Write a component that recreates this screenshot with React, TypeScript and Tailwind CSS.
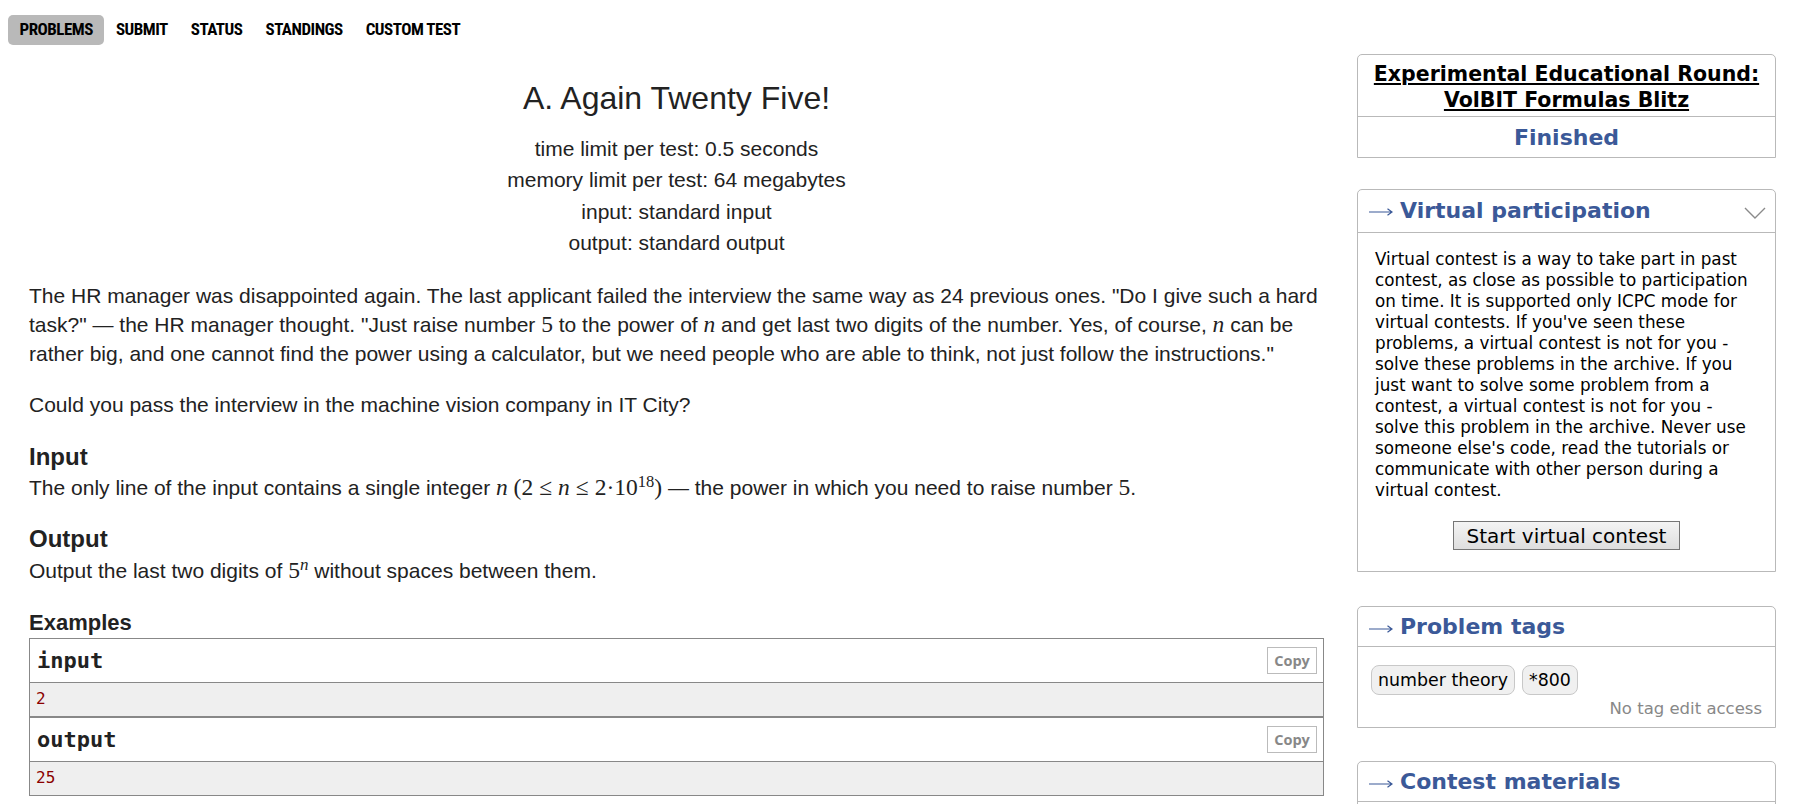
import type { ReactNode } from "react";

const NAV_ITEMS = ["PROBLEMS", "SUBMIT", "STATUS", "STANDINGS", "CUSTOM TEST"];

const VIRTUAL_TEXT = [
  "Virtual contest is a way to take part in past",
  "contest, as close as possible to participation",
  "on time. It is supported only ICPC mode for",
  "virtual contests. If you've seen these",
  "problems, a virtual contest is not for you -",
  "solve these problems in the archive. If you",
  "just want to solve some problem from a",
  "contest, a virtual contest is not for you -",
  "solve this problem in the archive. Never use",
  "someone else's code, read the tutorials or",
  "communicate with other person during a",
  "virtual contest.",
];

function Var({ children }: { children: ReactNode }) {
  return (
    <span className="font-['Liberation_Serif',serif] text-[23.5px] italic">
      {children}
    </span>
  );
}

function Num({ children }: { children: ReactNode }) {
  return (
    <span className="font-['Liberation_Serif',serif] text-[23.5px]">
      {children}
    </span>
  );
}

function SampleBlock({ title, value }: { title: string; value: string }) {
  return (
    <div className="border border-[#888]">
      <div className="flex h-[44px] items-center justify-between border-b border-[#888] pl-[7px] pr-[6px]">
        <span className="font-['DejaVu_Sans_Mono',monospace] text-[22px] font-bold text-[#222]">
          {title}
        </span>
        <button className="h-[27px] w-[50px] border border-[#bbb] bg-white font-['Open_Sans',sans-serif] text-[14.5px] font-bold text-[#888]">
          Copy
        </button>
      </div>
      <pre className="h-[33px] bg-[#efefef] pl-[6px] pt-[6px] font-['DejaVu_Sans_Mono',monospace] text-[16px] leading-[20px] text-[#8b0000]">
        {value}
      </pre>
    </div>
  );
}

function SideBox({
  title,
  chevron,
  headerHeight,
  children,
}: {
  title: string;
  chevron?: boolean;
  headerHeight: string;
  children?: ReactNode;
}) {
  return (
    <div className="rounded-t-[5px] border border-[#b9b9b9]">
      <div
        className={`flex items-center border-b border-[#b9b9b9] pl-[11px] pr-[9px] text-[#3b5998] ${headerHeight}`}
      >
        <svg
          className="mt-[4px] shrink-0"
          width="24"
          height="10"
          viewBox="0 0 24 10"
          fill="none"
        >
          <path
            d="M0 5H22.5M18.5 1.8L23 5L18.5 8.2"
            stroke="currentColor"
            strokeWidth="1.2"
          />
        </svg>
        <span className="ml-[7px] text-[22px] font-bold">{title}</span>
        {chevron && (
          <svg
            className="ml-auto mt-[6px]"
            width="22"
            height="12"
            viewBox="0 0 22 12"
            fill="none"
          >
            <polyline
              points="1,1 11,11 21,1"
              stroke="#8a8a8a"
              strokeWidth="1.4"
            />
          </svg>
        )}
      </div>
      {children}
    </div>
  );
}

export default function App() {
  return (
    <div className="min-h-screen bg-white">
      <nav className="flex pl-2 pt-[15px] font-['Roboto_Condensed','Liberation_Sans_Narrow','DejaVu_Sans_Condensed',sans-serif] text-[17px] font-bold tracking-[-0.5px] font-stretch-condensed text-black">
        {NAV_ITEMS.map((item, i) => (
          <a
            key={item}
            className={`flex h-[30px] items-center px-[11.5px] ${
              i === 0 ? "rounded-[5px] bg-[#b9b9b9]" : ""
            }`}
          >
            {item}
          </a>
        ))}
      </nav>

      <div className="flex gap-[33px] pl-[29px] pr-[36px]">
        <main className="min-w-0 flex-1 font-['Liberation_Sans',Arial,sans-serif] text-[21px] text-[#222]">
          <div className="pt-[35px] text-center">
            <div className="text-[32px] leading-[37px]">A. Again Twenty Five!</div>
            <div className="mt-[16px] leading-[31.3px]">
              <div>time limit per test: 0.5 seconds</div>
              <div>memory limit per test: 64 megabytes</div>
              <div>input: standard input</div>
              <div>output: standard output</div>
            </div>
          </div>

          <div className="mt-[23px] space-y-[22px] leading-[29px]">
            <p>
              The HR manager was disappointed again. The last applicant failed
              the interview the same way as 24 previous ones. "Do I give such a
              hard task?" — the HR manager thought. "Just raise number{" "}
              <Num>5</Num> to the power of <Var>n</Var> and get last two digits
              of the number. Yes, of course, <Var>n</Var> can be rather big, and
              one cannot find the power using a calculator, but we need people
              who are able to think, not just follow the instructions."
            </p>
            <p>Could you pass the interview in the machine vision company in IT City?</p>
          </div>

          <h3 className="mt-[24px] text-[24px] font-bold leading-[27px]">Input</h3>
          <p className="mt-[3px] leading-[29px]">
            The only line of the input contains a single integer <Var>n</Var>{" "}
            <Num>
              (2<span className="mx-[6px]">≤</span>
              <i>n</i>
              <span className="mx-[6px]">≤</span>2·10
              <sup className="text-[16.5px]">18</sup>)
            </Num>{" "}
            — the power in which you need to raise number <Num>5</Num>.
          </p>

          <h3 className="mt-[23px] text-[24px] font-bold leading-[27px]">Output</h3>
          <p className="mt-[4px] leading-[29px]">
            Output the last two digits of{" "}
            <Num>
              5<sup className="text-[17px] italic">n</sup>
            </Num>{" "}
            without spaces between them.
          </p>

          <h3 className="mt-[25px] text-[22px] font-bold leading-[25px]">Examples</h3>
          <div className="mt-[3px]">
            <SampleBlock title="input" value="2" />
            <SampleBlock title="output" value="25" />
          </div>
        </main>

        <aside className="w-[419px] shrink-0 pt-[9px] font-['DejaVu_Sans',Verdana,sans-serif]">
          <div className="rounded-t-[5px] border border-[#b9b9b9] text-center">
            <div className="border-b border-[#b9b9b9] pb-[3px] pt-[6px] text-[20.5px] font-bold leading-[26px] text-black">
              <a className="underline">
                Experimental Educational Round:
                <br />
                VolBIT Formulas Blitz
              </a>
            </div>
            <div className="flex h-[40px] items-center justify-center text-[22px] font-bold text-[#3b5998]">
              Finished
            </div>
          </div>

          <div className="mt-[31px]">
            <SideBox title="Virtual participation" chevron headerHeight="h-[43px] pb-[2px]">
              <div className="px-[17px] pb-[21px] pt-[16px]">
                <p className="text-[16.8px] leading-[21px] text-black">
                  {VIRTUAL_TEXT.map((line, i) => (
                    <span key={i}>
                      {line}
                      {i < VIRTUAL_TEXT.length - 1 && <br />}
                    </span>
                  ))}
                </p>
                <div className="mt-[20px] flex justify-center">
                  <button className="h-[29px] w-[227px] border border-[#767676] bg-gradient-to-b from-[#f4f4f4] to-[#dedede] text-[20px] leading-none text-black">
                    Start virtual contest
                  </button>
                </div>
              </div>
            </SideBox>
          </div>

          <div className="mt-[34px]">
            <SideBox title="Problem tags" headerHeight="h-[40px]">
              <div className="px-[13px] pb-[6px] pt-[18px]">
                <div className="flex gap-[7px]">
                  <span className="flex h-[30px] items-center rounded-[8px] border border-[#c8c8c8] bg-[#f0f0f0] px-[6px] text-[17.4px] text-black">
                    number theory
                  </span>
                  <span className="flex h-[30px] items-center rounded-[8px] border border-[#c8c8c8] bg-[#f0f0f0] px-[6px] text-[17.4px] text-black">
                    *800
                  </span>
                </div>
                <div className="mt-[2px] text-right text-[16.5px] leading-[24px] text-[#888]">
                  No tag edit access
                </div>
              </div>
            </SideBox>
          </div>

          <div className="mt-[33px]">
            <SideBox title="Contest materials" headerHeight="h-[40px]">
              <div className="h-[60px]" />
            </SideBox>
          </div>
        </aside>
      </div>
    </div>
  );
}
